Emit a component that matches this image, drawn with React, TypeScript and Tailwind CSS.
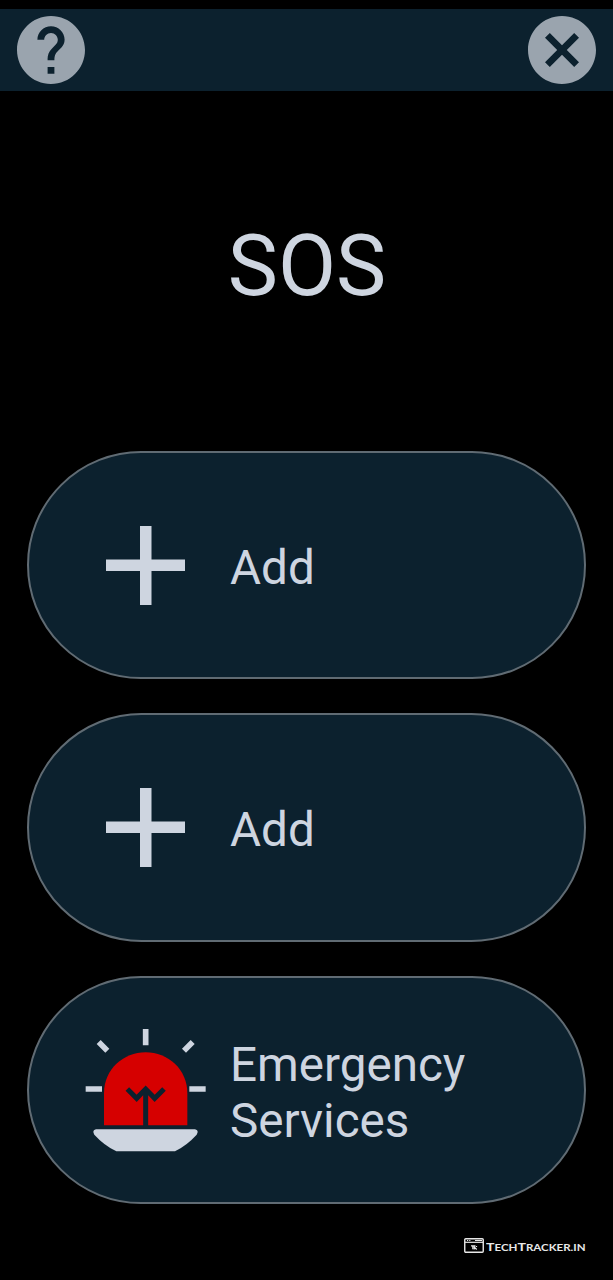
import type { ReactNode } from "react";

function RoundIcon({ label, d }: { label: string; d: string }) {
  return (
    <button aria-label={label} className="size-[68px]">
      <svg viewBox="2 2 20 20" className="block size-full fill-[#9aa4ae]">
        <path d={d} />
      </svg>
    </button>
  );
}

function Plus() {
  return (
    <svg viewBox="0 0 79 79" className="mr-[2px] block size-[79px] fill-[#ced5e0]">
      <path d="M34 0h11.5v33.5H79V45H45.5v34H34V45H0V33.5h34z" />
    </svg>
  );
}

function Siren() {
  return (
    <svg viewBox="45 54 366 375" className="mt-[2px] block h-[125px] w-[122px]">
      <g fill="none" stroke="#ced5e0" strokeWidth="17">
        <path d="M227 57v49M47 237h49M358 237h49M86 96l26 26M368 96l-26 26" />
      </g>
      <path d="M102 346V250C102 178 160 127 227 127s125 51 125 123v96z" fill="#d60000" />
      <path d="M227 350V236M172 237l28 28 27-28 27 28 28-28" fill="none" stroke="#0c212e" strokeWidth="15" />
      <path
        d="M78 358H375Q388 361 380 374Q352 405 315 424H139Q101 405 73 374Q65 361 78 358z"
        fill="#ced5e0"
      />
    </svg>
  );
}

function Pill({ icon, children }: { icon: ReactNode; children: ReactNode }) {
  return (
    <button className="flex h-[228.2px] w-full items-center rounded-full border-2 border-[#606b73] bg-[#0c212e] pl-[56px] text-left">
      <span className="flex w-[122px] shrink-0 justify-center">{icon}</span>
      <span className="ml-[23px] w-[260px] pt-[6px] text-[47.6px] leading-[56px]">{children}</span>
    </button>
  );
}

export default function App() {
  return (
    <main className="flex h-[1280px] w-[613px] flex-col overflow-hidden bg-black pt-[9px] font-['Roboto',sans-serif] text-[#ced5e0]">
      <header className="flex h-[82px] shrink-0 items-center justify-between bg-[#0c212e] px-[17px]">
        <RoundIcon
          label="Help"
          d="M12 2C6.48 2 2 6.48 2 12s4.48 10 10 10 10-4.48 10-10S17.52 2 12 2zm1 17h-2v-2h2v2zm2.07-7.75l-.9.92C13.45 12.9 13 13.5 13 15h-2v-.5c0-1.1.45-2.1 1.17-2.83l1.24-1.26c.37-.36.59-.86.59-1.41 0-1.1-.9-2-2-2s-2 .9-2 2H8c0-2.21 1.79-4 4-4s4 1.79 4 4c0 .88-.36 1.68-.93 2.25z"
        />
        <RoundIcon
          label="Close"
          d="M12 2C6.47 2 2 6.47 2 12s4.47 10 10 10 10-4.47 10-10S17.53 2 12 2zm5 13.59L15.59 17 12 13.41 8.41 17 7 15.59 10.59 12 7 8.41 8.41 7 12 10.59 15.59 7 17 8.41 13.41 12 17 15.59z"
        />
      </header>
      <h1 className="flex h-[360px] shrink-0 items-center justify-center pb-[8px] pl-[1px] text-[84.5px] leading-[100px]">
        SOS
      </h1>
      <section className="flex shrink-0 flex-col gap-[34.2px] px-[27px]">
        <Pill icon={<Plus />}>Add</Pill>
        <Pill icon={<Plus />}>Add</Pill>
        <Pill icon={<Siren />}>Emergency Services</Pill>
      </section>
      <footer className="mt-[34px] flex h-[15px] shrink-0 items-center pl-[464px] text-[#e8e8e8]">
        <svg viewBox="0 0 20 15" className="block h-[15px] w-[20px] shrink-0" fill="none" stroke="currentColor">
          <rect x="0.75" y="0.75" width="18.5" height="13.5" rx="1" strokeWidth="1.4" />
          <path d="M1 4.3h18" strokeWidth="1.2" />
          <path d="M3 2.5h1.2M5.2 2.5h1.2M11 2.5h7" strokeWidth="1" />
          <path d="M7 7.8h4.5M8.8 7.8v3.5M10.2 11.5V9l2.5 2.5M12.5 8v1" strokeWidth="1.2" />
        </svg>
        <span className="ml-[1.5px] origin-left scale-x-[1.28] pt-[4px] font-['Lato',sans-serif] text-[9px] leading-[12px] font-bold whitespace-nowrap">
          <span className="text-[11px]">T</span>ECH<span className="text-[11px]">T</span>RACKER.IN
        </span>
      </footer>
    </main>
  );
}
